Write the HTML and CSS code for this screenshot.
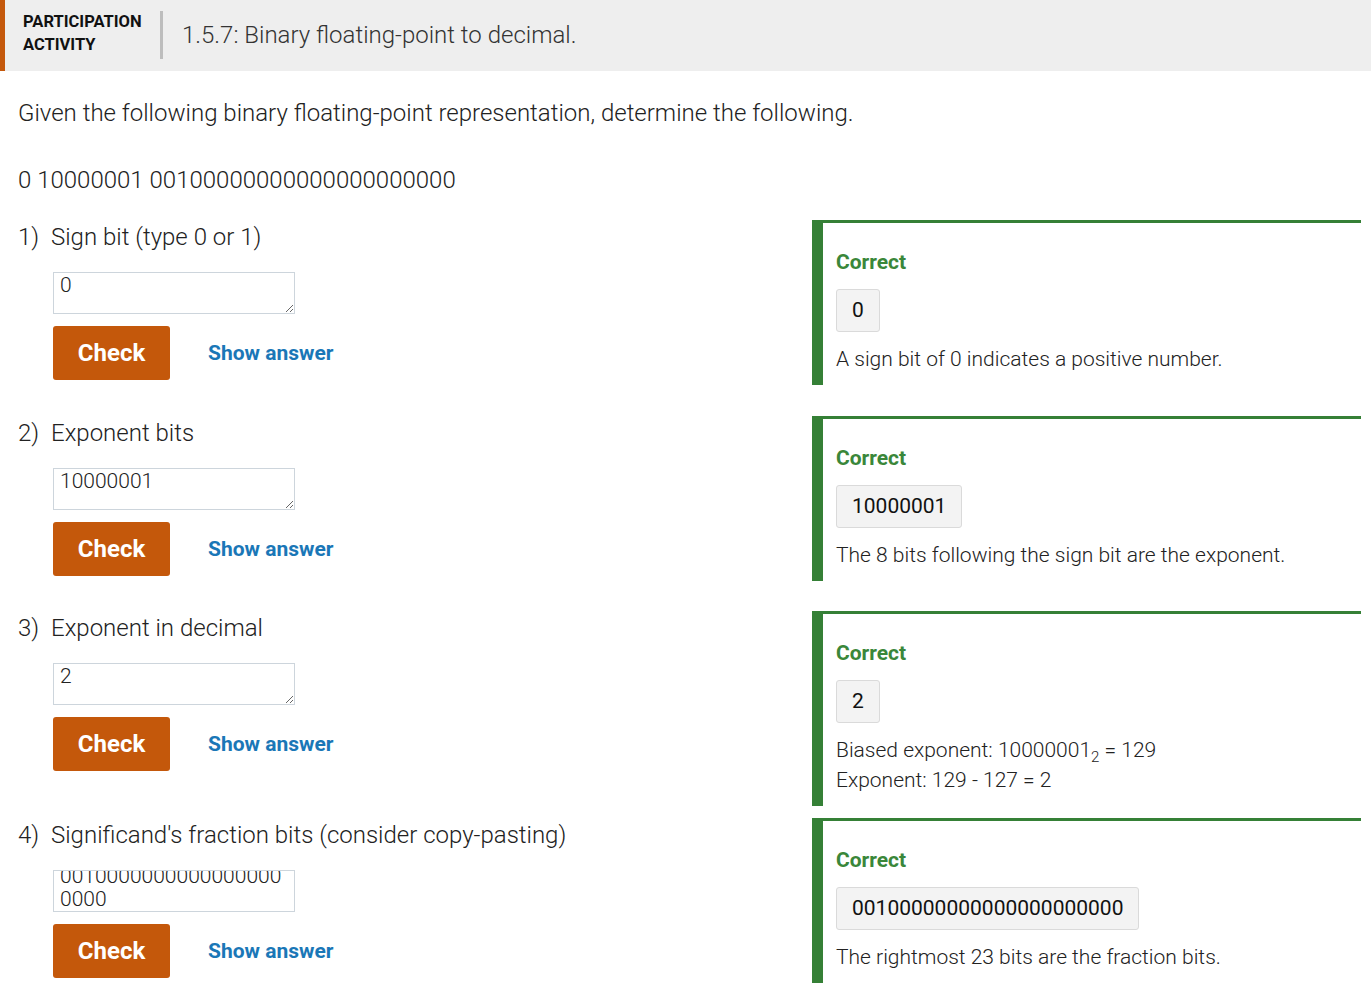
FILE: index.html
```html
<!DOCTYPE html>
<html lang="en">
<head>
<meta charset="utf-8">
<title>1.5.7: Binary floating-point to decimal.</title>
<link rel="stylesheet" href="styles.css">
</head>
<body>
<header class="activity-header">
  <div class="activity-label">PARTICIPATION<br>ACTIVITY</div>
  <div class="header-divider"></div>
  <h1 class="activity-title">1.5.7: Binary floating-point to decimal.</h1>
</header>
<main class="content">
  <p class="prompt">Given the following binary floating-point representation, determine the following.</p>
  <p class="bits">0 10000001 00100000000000000000000</p>

  <div class="question-row">
    <div class="question">
      <div class="q-text"><span class="q-num">1)</span><span>Sign bit (type 0 or 1)</span></div>
      <textarea class="answer">0</textarea>
      <div class="actions"><button class="check">Check</button><button class="show">Show answer</button></div>
    </div>
    <div class="feedback">
      <div class="fb-title">Correct</div>
      <div class="fb-answer">0</div>
      <div class="fb-text">A sign bit of 0 indicates a positive number.</div>
    </div>
  </div>

  <div class="question-row">
    <div class="question">
      <div class="q-text"><span class="q-num">2)</span><span>Exponent bits</span></div>
      <textarea class="answer">10000001</textarea>
      <div class="actions"><button class="check">Check</button><button class="show">Show answer</button></div>
    </div>
    <div class="feedback">
      <div class="fb-title">Correct</div>
      <div class="fb-answer">10000001</div>
      <div class="fb-text">The 8 bits following the sign bit are the exponent.</div>
    </div>
  </div>

  <div class="question-row">
    <div class="question">
      <div class="q-text"><span class="q-num">3)</span><span>Exponent in decimal</span></div>
      <textarea class="answer">2</textarea>
      <div class="actions"><button class="check">Check</button><button class="show">Show answer</button></div>
    </div>
    <div class="feedback">
      <div class="fb-title">Correct</div>
      <div class="fb-answer">2</div>
      <div class="fb-text">Biased exponent: 10000001<sub>2</sub> = 129<br>Exponent: 129 - 127 = 2</div>
    </div>
  </div>

  <div class="question-row">
    <div class="question">
      <div class="q-text"><span class="q-num">4)</span><span>Significand's fraction bits (consider copy-pasting)</span></div>
      <textarea class="answer scrolled">00100000000000000000000</textarea>
      <div class="actions"><button class="check">Check</button><button class="show">Show answer</button></div>
    </div>
    <div class="feedback">
      <div class="fb-title">Correct</div>
      <div class="fb-answer">00100000000000000000000</div>
      <div class="fb-text">The rightmost 23 bits are the fraction bits.</div>
    </div>
  </div>
</main>
<script src="script.js"></script>
</body>
</html>
```

FILE: styles.css
```css
* { box-sizing: border-box; }

body {
  margin: 0;
  font-family: Roboto, "Liberation Sans", sans-serif;
  color: #222;
  background: #fff;
}

.activity-header {
  display: flex;
  align-items: center;
  height: 71px;
  background: #eeeeee;
  border-left: 5px solid #c4580b;
  padding: 0 0 5px 18px;
}

.activity-label {
  font-weight: 700;
  font-size: 16.5px;
  line-height: 23px;
  color: #111;
  width: 137px;
}

.header-divider {
  width: 3px;
  height: 48px;
  margin-top: 4px;
  background: #bdbdbd;
}

.activity-title {
  margin: 0 0 0 19px;
  padding-top: 4px;
  font-weight: 300;
  font-size: 24px;
  color: #333;
}

.content {
  padding: 0 10px 0 18px;
}

.prompt {
  margin: 27px 0 0;
  font-size: 24px;
  font-weight: 300;
  line-height: 30px;
}

.bits {
  margin: 37px 0 25px;
  font-size: 24px;
  font-weight: 300;
  line-height: 30px;
}

.question-row {
  display: flex;
  align-items: flex-start;
  margin-bottom: 12px;
}

.question {
  flex: 1;
  padding-bottom: 23.5px;
}

.q-text {
  display: flex;
  font-size: 24px;
  font-weight: 300;
  line-height: 34px;
}

.q-num {
  width: 33px;
}

.answer {
  display: block;
  margin: 18px 0 0 35px;
  width: 242px;
  height: 42px;
  border: 1px solid #cdd5dc;
  border-radius: 0;
  padding: 1px 6px 0;
  font-family: Roboto, "Liberation Sans", sans-serif;
  font-size: 21px;
  font-weight: 300;
  line-height: 23px;
  color: #222;
  background: #fff;
  overflow: hidden;
}

.answer.scrolled {
  resize: none;
}

.actions {
  display: flex;
  align-items: center;
  margin: 12px 0 0 35px;
  gap: 38px;
}

.check {
  width: 117px;
  height: 54px;
  border: none;
  border-radius: 3px;
  background: #c4580b;
  color: #fff;
  font-family: Roboto, "Liberation Sans", sans-serif;
  font-size: 24px;
  font-weight: 700;
  padding: 0;
}

.show {
  border: none;
  background: none;
  padding: 0;
  color: #1a77b7;
  font-family: Roboto, "Liberation Sans", sans-serif;
  font-size: 21px;
  font-weight: 700;
}

.feedback {
  width: 549px;
  border-top: 3px solid #358036;
  border-left: 11px solid #358036;
  padding: 25px 20px 11px 13px;
}

.fb-title {
  color: #3a873a;
  font-weight: 700;
  font-size: 21px;
  line-height: 28px;
}

.fb-answer {
  display: inline-block;
  margin-top: 13px;
  height: 43px;
  padding: 0 15px;
  background: #f3f3f3;
  border: 1px solid #dadada;
  border-radius: 3px;
  font-size: 21px;
  font-weight: 400;
  line-height: 41px;
  color: #111;
}

.fb-text {
  margin-top: 12px;
  font-size: 21px;
  font-weight: 300;
  line-height: 30px;
}

.fb-text sub {
  font-size: 15px;
  line-height: 0;
  vertical-align: -5px;
}
```

FILE: script.js
```js
document.querySelectorAll('.scrolled').forEach(function (t) {
  t.scrollTop = t.scrollHeight;
});
```
